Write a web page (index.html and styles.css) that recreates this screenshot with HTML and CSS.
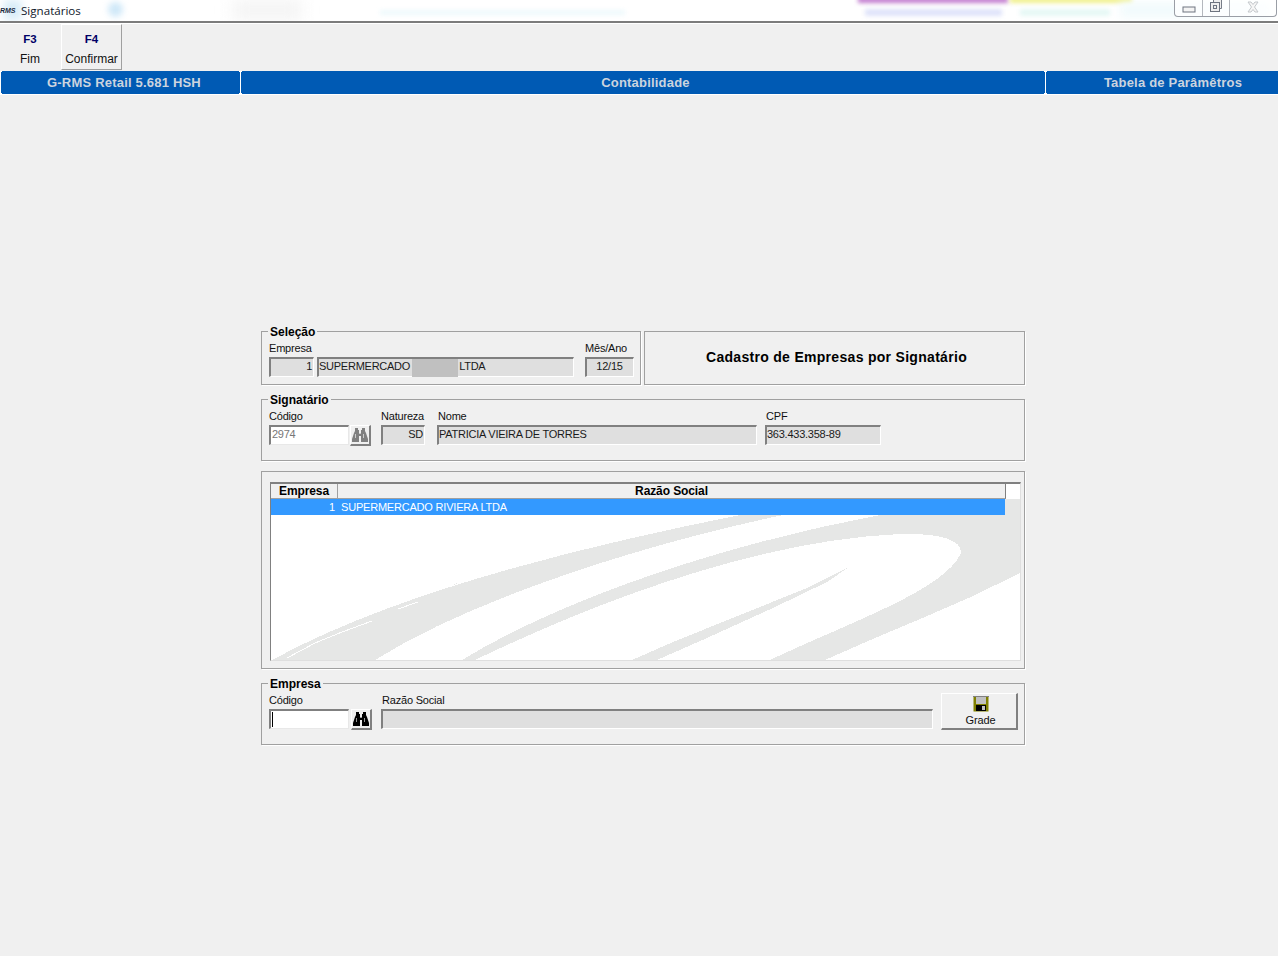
FILE: index.html
```html
<!DOCTYPE html>
<html lang="pt-BR">
<head>
<meta charset="utf-8">
<title>Signatários</title>
<link rel="stylesheet" href="styles.css">
</head>
<body>
<header class="titlebar">
  <div class="glass">
    <span class="blur blur-a"></span>
    <span class="blur blur-b"></span>
    <span class="blur blur-c"></span>
    <span class="blur blur-d"></span>
    <span class="blur blur-e"></span>
    <span class="blur blur-f"></span>
    <span class="blur blur-g"></span>
    <span class="blur blur-h"></span>
    <span class="blur blur-i"></span>
  </div>
  <span class="app-icon">RMS</span>
  <span class="app-title">Signatários</span>
  <div class="winbtns">
    <span class="winbtn win-min"><svg width="14" height="8" viewBox="0 0 14 8"><rect x="1" y="2" width="12" height="5" fill="#f4f4f4" stroke="#6e7480"/></svg></span>
    <span class="winbtn win-max"><svg width="14" height="14" viewBox="0 0 14 14"><path d="M4.500 3.500V.5h8v9h-2" fill="#eee" stroke="#777d88"/><rect x="1.500" y="3.500" width="9" height="9" fill="#eee" stroke="#6e7480"/><rect x="4.500" y="6.500" width="3" height="3" fill="none" stroke="#6e7480"/></svg></span>
    <span class="winbtn win-close"><svg width="14" height="12" viewBox="0 0 14 12"><path d="M2 1h3l2 2.500L9 1h3L8.500 6 12 11H9L7 8.500 5 11H2l3.500-5z" fill="#f6f6f6" stroke="#c4c8cc"/></svg></span>
  </div>
</header>

<nav class="toolbar">
  <div class="tool"><b class="tool-key">F3</b><span class="tool-name">Fim</span></div>
  <div class="tool tool-raised"><b class="tool-key">F4</b><span class="tool-name">Confirmar</span></div>
</nav>

<div class="statusbar">
  <div class="cell cell-app">G-RMS Retail 5.681 HSH</div>
  <div class="cell cell-module">Contabilidade</div>
  <div class="cell cell-table">Tabela de Parâmêtros</div>
</div>

<main class="main">
  <div class="form">
    <div class="top-row">
      <fieldset class="group group-selecao">
        <legend>Seleção</legend>
        <div class="fields">
          <div class="field w45"><label>Empresa</label><div class="box right">1</div></div>
          <div class="field w257 ml3"><label class="hidden-label">&nbsp;</label>
            <div class="box">SUPERMERCADO<span class="redacted"></span>LTDA</div></div>
          <div class="field w49 ml11"><label>Mês/Ano</label><div class="box center">12/15</div></div>
        </div>
      </fieldset>
      <div class="banner">Cadastro de Empresas por Signatário</div>
    </div>

    <fieldset class="group group-signatario">
      <legend>Signatário</legend>
      <div class="fields">
        <div class="field w80"><label>Código</label><div class="box box-white muted">2974</div></div>
        <button class="lookup lookup-off" type="button"><svg width="16" height="14" viewBox="0 0 16 14"><use href="#bino"/></svg></button>
        <div class="field w44 ml10"><label>Natureza</label><div class="box right">SD</div></div>
        <div class="field w320 ml12"><label class="label-in">Nome</label><div class="box">PATRICIA VIEIRA DE TORRES</div></div>
        <div class="field w116 ml8"><label class="label-in">CPF</label><div class="box">363.433.358-89</div></div>
      </div>
    </fieldset>

    <section class="group-plain">
      <div class="grid">
        <svg class="swoosh" width="751" height="179" viewBox="270 482 751 179" shape-rendering="crispEdges" aria-hidden="true">
          <path fill="#e6e7e6" d="M272 660C400 590 590 545 740 515H783C640 545 470 600 375 660z"/>
          <path fill="#e6e7e6" d="M430 597L477 573 440 592z"/>
          <path fill="#e6e7e6" d="M462 660C560 600 720 545 880 515H1005V499H1020V573C960 605 890 630 825 660H770C850 622 945 590 961 553C962 540 940 533 900 534C760 540 600 600 475 660z"/>
          <path fill="#e6e7e6" d="M849 567L807 588 740 615 673 642 632 660H657L707 638 773 608 827 582z"/>
          <path fill="none" stroke="#fff" d="M287 658L315 643 342 632 372 621M398 609L418 602"/>
        </svg>
        <div class="grid-head">
          <div class="th th-emp">Empresa</div>
          <div class="th th-razao">Razão Social</div>
        </div>
        <div class="grid-row">
          <div class="td-emp">1</div>
          <div class="td-razao">SUPERMERCADO RIVIERA LTDA</div>
        </div>
      </div>
    </section>

    <fieldset class="group group-empresa">
      <legend>Empresa</legend>
      <div class="fields">
        <div class="field w80"><label>Código</label><div class="box box-white"><span class="caret"></span></div></div>
        <button class="lookup lookup-on" type="button"><svg width="16" height="14" viewBox="0 0 16 14"><use href="#bino"/></svg></button>
        <div class="field w552 ml9"><label class="label-in">Razão Social</label><div class="box"></div></div>
        <button class="grade" type="button">
          <svg width="16" height="16" viewBox="0 0 16 16"><rect x=".5" y=".5" width="15" height="15" fill="#808000"/><rect x="0" y="0" width="16" height="1" fill="#808080"/><rect x="3" y="1" width="10" height="7" fill="#c0c0c0"/><rect x="3" y="9" width="10" height="6" fill="#000"/><rect x="9" y="10" width="3" height="4" fill="#c0c0c0"/></svg>
          <span>Grade</span>
        </button>
      </div>
    </fieldset>
  </div>
</main>

<svg class="defs" width="0" height="0" aria-hidden="true">
  <symbol id="bino" viewBox="0 0 16 14">
    <path fill="currentColor" d="M3 0h3v2h1v3h2V2h1V0h3v3l1 2 2 6v3H9V8H7v6H0v-3l2-6 1-2z"/>
    <path fill="#fff" opacity=".6" d="M3 6h1v4H3zM11 6h1v4h-1zM7 5h2v1H7z"/>
  </symbol>
</svg>
</body>
</html>
```
FILE: styles.css
```css
* { box-sizing: border-box; }
html, body { margin: 0; height: 100%; }
body {
  width: 1278px;
  height: 956px;
  overflow: hidden;
  background: #f0f0f0;
  font-family: "Liberation Sans", Arial, sans-serif;
  font-size: 11px;
  color: #000;
  display: flex;
  flex-direction: column;
}

/* Window title */
.titlebar {
  position: relative;
  height: 23px;
  flex: none;
  background: #fff;
  border-bottom: 2px solid #7c7c7c;
  box-shadow: 0 1px 0 #fff;
  display: flex;
  align-items: center;
  z-index: 2;
}
.glass { position: absolute; inset: 0; overflow: hidden; }
.blur { position: absolute; display: block; filter: blur(2px); }
.blur-a { left: 4px; top: 0; width: 18px; height: 20px; background: #d8edf8; filter: blur(4px); }
.blur-b { left: 108px; top: 2px; width: 15px; height: 15px; border-radius: 50%; background: #cfe8f8; filter: blur(3px); }
.blur-c { left: 232px; top: 0; width: 70px; height: 20px; background: #f4f4f4; filter: blur(8px); }
.blur-d { left: 380px; top: 10px; width: 245px; height: 5px; background: #eef9fc; }
.blur-e { left: 858px; top: -3px; width: 150px; height: 6px; background: #c27ccf; }
.blur-f { left: 1010px; top: -3px; width: 122px; height: 6px; background: #f0f08c; }
.blur-g { left: 865px; top: 9px; width: 137px; height: 7px; background: #dfe3fa; }
.blur-h { left: 1020px; top: 9px; width: 90px; height: 7px; background: #e6f8f5; }
.blur-i { left: 1120px; top: 2px; width: 150px; height: 16px; background: #f2fbfd; filter: blur(4px); }
.app-icon {
  position: relative;
  width: 18px;
  font-size: 7px;
  font-weight: bold;
  font-style: italic;
  color: #1c2a40;
  letter-spacing: -.1px;
}
.app-title {
  position: relative;
  margin-left: 3px;
  font-family: "Open Sans", sans-serif;
  font-size: 11.600px;
  color: #10182c;
}
.winbtns {
  position: absolute;
  top: -1px;
  right: 1px;
  height: 18px;
  width: 103px;
  display: flex;
  background: rgba(255, 255, 255, .7);
  border: 1px solid #9a9ea6;
  border-top: 0;
  border-radius: 0 0 4px 4px;
}
.winbtn { display: flex; align-items: center; justify-content: center; }
.win-min { width: 28px; border-right: 1px solid #b4b8be; padding-top: 3px; }
.win-max { width: 27px; border-right: 1px solid #b4b8be; padding-bottom: 3px; }
.win-close { flex: 1; padding: 0 0 2px 0; }

/* Toolbar */
.toolbar {
  height: 48px;
  flex: none;
  display: flex;
  gap: 1px;
  padding-top: 1px;
}
.tool {
  width: 60px;
  height: 46px;
  display: flex;
  flex-direction: column;
  align-items: center;
  padding-top: 8px;
}
.tool-raised { border: 1px solid; border-color: #fff #a0a0a0 #a0a0a0 #fff; padding-top: 7px; width: 61px; }
.tool-key { color: #000066; font-size: 11.500px; line-height: 14px; }
.tool-name { font-size: 12px; line-height: 14px; margin-top: 6px; color: #111; }

/* Blue bar */
.statusbar {
  height: 24px;
  flex: none;
  display: flex;
  background: #005ab4;
  border-bottom: 1px solid #fff;
}
.cell {
  position: relative;
  display: flex;
  align-items: center;
  justify-content: center;
  border-left: 1px solid #fff;
  color: #ccd4df;
  font-size: 13px;
  font-weight: bold;
  letter-spacing: .2px;
}
.cell::before, .cell::after {
  content: "";
  position: absolute;
  left: -2px;
  width: 3px;
  height: 1px;
  background: #fff;
}
.cell::before { top: 0; }
.cell::after { bottom: 0; }
.cell-app { width: 240px; padding-left: 7px; }
.cell-module { width: 805px; padding-left: 5px; }
.cell-table { flex: 1; padding-left: 22px; }

/* Form */
.main { flex: 1; padding: 229px 0 0 261px; }
.form { width: 764px; }
.top-row { display: flex; gap: 3px; }

.group {
  margin: 0;
  min-width: 0;
  border: 1px solid #a0a0a0;
  box-shadow: 1px 1px 0 #fff;
  padding: 3px 7px 7px;
}
.group legend {
  margin-left: -1px;
  padding: 2px 2px 0;
  font-size: 12px;
  font-weight: bold;
  line-height: 13px;
}
.group-selecao { width: 380px; height: 61px; flex: none; }
.group-signatario { margin-top: 7px; height: 69px; }
.group-empresa { margin-top: 7px; height: 69px; }

.banner {
  flex: 1;
  margin-top: 7px;
  border: 1px solid #a0a0a0;
  box-shadow: 1px 1px 0 #fff;
  display: flex;
  align-items: center;
  justify-content: center;
  font-size: 14px;
  font-weight: bold;
  letter-spacing: .3px;
  padding: 0 0 2px 4px;
}

.fields { display: flex; align-items: flex-start; }
.field { flex: none; display: flex; flex-direction: column; }
.field label { display: block; height: 12px; line-height: 12px; margin-bottom: 3px; font-size: 11px; letter-spacing: -.2px; color: #111; white-space: nowrap; }
.field .label-in { padding-left: 1px; }

.w45 { width: 45px; }
.w49 { width: 49px; }
.w44 { width: 44px; }
.w80 { width: 80px; }
.w116 { width: 116px; }
.w257 { width: 257px; }
.w320 { width: 320px; }
.w552 { width: 552px; }
.ml3 { margin-left: 3px; }
.ml8 { margin-left: 8px; }
.ml9 { margin-left: 9px; }
.ml10 { margin-left: 10px; }
.ml11 { margin-left: 11px; }
.ml12 { margin-left: 12px; }

.box {
  height: 20px;
  padding: 0 1px 4px 0;
  display: flex;
  align-items: center;
  background: #dfdfdf;
  border: solid;
  border-color: #808080 #fff #fff #808080;
  border-width: 2px 1px 1px 2px;
  font-size: 11px;
  color: #1a1a1a;
  white-space: nowrap;
  letter-spacing: -.25px;
}
.right { justify-content: flex-end; }
.center { justify-content: center; }
.box-white { background: #fff; border-color: #808080 #e8e8e8 #e8e8e8 #808080; padding-left: 1px; }
.muted { color: #777; }
.redacted { width: 46px; height: 18px; margin: 4px 1px 0 2px; background: #c0c0c0; }
.caret { width: 1px; height: 15px; margin-top: 4px; background: #000; }

.lookup {
  flex: none;
  width: 21px;
  height: 21px;
  margin: 15px 0 0 1px;
  padding: 0;
  background: #f0f0f0;
  border: solid;
  border-width: 1px 2px 2px 1px;
  border-color: #fff #808080 #808080 #fff;
  display: flex;
  align-items: center;
  justify-content: center;
}
.lookup-on { color: #000; margin-left: 2px; }
.lookup-off { color: #808080; }

.group-plain {
  margin-top: 10px;
  height: 198px;
  border: 1px solid #a0a0a0;
  box-shadow: 1px 1px 0 #fff;
  padding: 10px 3px 7px 8px;
}
.grid {
  position: relative;
  height: 179px;
  width: 751px;
  background: #fff;
  border: solid;
  border-width: 2px 1px 1px 1px;
  border-color: #808080 #dfdfdf #dfdfdf #808080;
}
.swoosh { position: absolute; left: -1px; top: -2px; }
.grid-head {
  position: relative;
  display: flex;
  width: 735px;
  height: 15px;
  background: #f0f0f0;
  border-right: 1px solid #808080;
  border-bottom: 1px solid #a0a0a0;
}
.th { font-size: 12px; font-weight: bold; line-height: 15px; text-align: center; letter-spacing: -.1px; }
.th-emp { width: 67px; border-right: 1px solid #a0a0a0; }
.th-razao { flex: 1; }
.grid-row {
  position: relative;
  width: 734px;
  height: 16px;
  display: flex;
  background: #3399ff;
  color: #fff;
  font-size: 11px;
  line-height: 16px;
  letter-spacing: -.2px;
}
.td-emp { width: 64px; text-align: right; }
.td-razao { margin-left: 6px; }

.grade {
  flex: none;
  width: 77px;
  height: 37px;
  margin: -1px 0 0 8px;
  padding: 2px 0 0 3px;
  background: #f0f0f0;
  border: solid;
  border-width: 1px 2px 2px 1px;
  border-color: #fff #808080 #808080 #fff;
  display: flex;
  flex-direction: column;
  align-items: center;
  font-family: inherit;
  font-size: 11px;
  letter-spacing: -.1px;
  color: #111;
}
.grade span { line-height: 12px; margin-top: 2px; }
.defs { position: absolute; }
```
